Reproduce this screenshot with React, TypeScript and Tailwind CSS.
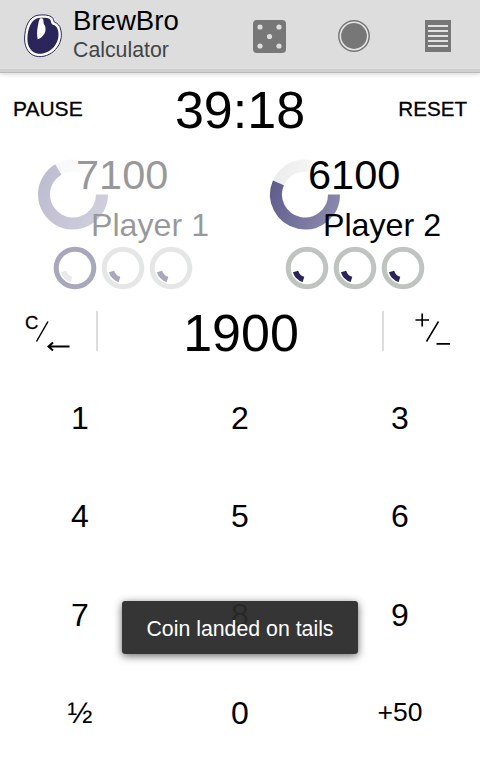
const NAVY = "#2b2659"

const players = [
  { name: "Player 1", points: "7100", sweep: 239.6, active: false, won: 1 },
  { name: "Player 2", points: "6100", sweep: 203.5, active: true, won: 0 },
]

const keys = ["1", "2", "3", "4", "5", "6", "7", "8", "9", "½", "0", "+50"]

// clockwise arc, 0deg at three o'clock
const arc = (cx: number, cy: number, r: number, from: number, to: number) => {
  const point = (deg: number) => {
    const rad = (deg * Math.PI) / 180
    return `${(cx + r * Math.cos(rad)).toFixed(2)} ${(cy + r * Math.sin(rad)).toFixed(2)}`
  }
  return `M${point(from)} A${r} ${r} 0 ${to - from > 180 ? 1 : 0} 1 ${point(to)}`
}

const Logo = () => (
  <svg className="ml-6 h-11 w-[38px]" viewBox="0 0 38 44">
    <path
      d="M14 1.200 C19 .6 24.500 .8 27.500 2.800 C29.800 4.500 29.300 6.500 30.300 8 C33.500 9.300 36 11.500 36.500 15 C38.200 20 37.600 27 33.500 33 C29 39.500 22 43 14.500 42.600 C5 42 .6 33.500 .6 25 C.6 13 5 2.500 14 1.200 Z"
      fill="#fff"
      stroke={NAVY}
      strokeWidth="1"
    />
    <path
      d="M14.500 4 C19 3.400 23.500 3.400 25.800 5 C27.300 6.400 26.600 9 28.300 10.400 C31.500 11.300 33.500 13.200 33.900 16 C35.300 21 34.500 26.500 31 31.500 C27 37 21 40 14.800 39.800 C7 39.300 3.400 32 3.400 25 C3.400 14.500 7.500 5 14.500 4 Z"
      fill={NAVY}
    />
    <path d="M16 4.500 C17.500 4 18.800 4.300 19.200 5.500 L19.800 10 C22 12 22 17 20.500 19.500 C18.500 22.500 16.500 24.500 13.700 25.200 C12.700 21 13 16.500 13.700 13 C14.500 9.500 14.500 6.500 16 4.500 Z" fill="#fff" />
  </svg>
)

const DiceIcon = () => (
  <svg className="h-[33px] w-[33px]" viewBox="0 0 33 33">
    <rect width="33" height="33" rx="4" fill="#777" />
    <g fill="#ddd">
      <circle cx="7" cy="7" r="2.600" />
      <circle cx="26" cy="7" r="2.600" />
      <circle cx="16.500" cy="16.500" r="2.600" />
      <circle cx="7" cy="26" r="2.600" />
      <circle cx="26" cy="26" r="2.600" />
    </g>
  </svg>
)

const CoinIcon = () => (
  <svg className="h-8 w-8" viewBox="0 0 32 32">
    <circle cx="16" cy="16" r="15.200" fill="#e6e6e6" stroke="#777" strokeWidth="1.500" />
    <circle cx="16" cy="16" r="12.900" fill="#777" />
  </svg>
)

const LogIcon = () => (
  <svg className="h-8 w-[26px]" viewBox="0 0 26 32">
    <rect width="26" height="32" fill="#777" />
    <path d="M3 6h20M3 11h20M3 16h20M3 21h20M3 26h20" stroke="#e2e2e2" strokeWidth="2" />
  </svg>
)

const Header = () => (
  <header className="flex h-[73px] items-center border-b border-[#b9b9b9] bg-[#ddd] shadow-[inset_0_-3px_0_#d0d0d0,0_1px_5px_rgba(0,0,0,0.18)]">
    <Logo />
    <div className="ml-[11px] flex w-[168px] flex-col pb-0.5">
      <h1 className="text-[27.600px] leading-[30px]">BrewBro</h1>
      <p className="text-[21.300px] leading-[28px] text-[#444]">Calculator</p>
    </div>
    <div className="ml-3 flex items-center">
      <DiceIcon />
      <div className="ml-[52px]">
        <CoinIcon />
      </div>
      <div className="ml-[55px]">
        <LogIcon />
      </div>
    </div>
  </header>
)

const Player = ({ name, points, sweep, active, won }: (typeof players)[number]) => (
  <section className={`relative h-[150px] w-[232px] ${active ? "" : "opacity-40"}`}>
    <svg className="h-[150px] w-[232px]" viewBox="0 0 232 150">
      <defs>
        <linearGradient id={`lp-${points}`} x1="38" y1="20" x2="108" y2="50" gradientUnits="userSpaceOnUse">
          <stop offset="0" stopColor="#5a5788" />
          <stop offset="1" stopColor="#8886ab" />
        </linearGradient>
        <linearGradient id={`track-${points}`} x1="40" y1="0" x2="96" y2="0" gradientUnits="userSpaceOnUse">
          <stop offset="0" stopColor="#ececec" />
          <stop offset="0.600" stopColor="#f3f3f3" />
          <stop offset="1" stopColor="#fff" />
        </linearGradient>
      </defs>
      <g fill="none">
        <path d={arc(73, 49.5, 29, sweep, 320)} stroke={`url(#track-${points})`} strokeWidth="12" />
        <path d={arc(73, 49.5, 29, 0, sweep)} stroke={`url(#lp-${points})`} strokeWidth="12" />
        {[75, 123, 171].map((cx, i) => (
          <g key={cx}>
            <circle cx={cx} cy="123" r="18.800" stroke={i < won ? NAVY : "#c0c4c1"} strokeWidth="5" />
            <path d={arc(cx, 123, 12, 107, 163)} stroke={i < won ? "#c8cac9" : NAVY} strokeWidth="5.500" />
          </g>
        ))}
      </g>
    </svg>
    <span className="absolute left-[76px] top-[8px] text-[41.500px] leading-[44px]">{points}</span>
    <span className="absolute left-[91px] top-[62px] whitespace-nowrap text-[32.200px] leading-[36px]">{name}</span>
  </section>
)

const App = () => {
  return (
    <div className="relative flex h-[762px] w-[480px] flex-col overflow-hidden bg-white font-['Liberation_Sans',Arial,sans-serif] text-black">
      <Header />
      <div className="flex h-[72px] items-center justify-between px-[13px]">
        <button className="w-24 text-left text-[21px] [-webkit-text-stroke:0.3px_#000]">PAUSE</button>
        <span className="pt-0.5 text-[52px] leading-[60px]">39:18</span>
        <button className="w-24 text-right text-[20.600px] [-webkit-text-stroke:0.3px_#000]">RESET</button>
      </div>
      <div className="flex h-[155px]">
        {players.map((player) => (
          <Player key={player.name} {...player} />
        ))}
      </div>
      <div className="mb-2 flex h-[61px] items-center">
        <button className="flex h-full w-24 items-center pl-6">
          <svg className="h-10 w-12" viewBox="0 0 48 40" fill="none" stroke="#000">
            <text x="1" y="17.500" fontSize="18.500" fill="#000" strokeWidth="0.300">
              C
            </text>
            <path d="M12.500 30.500 L24 10.500" strokeWidth="1.500" />
            <path d="M25 35.500 H45.500 M29 31.500 L24.500 35.500 L29 39.500" strokeWidth="2" />
          </svg>
        </button>
        <div className="flex h-10 flex-1 items-center justify-center border-x-2 border-[#ddd] pl-0.5 pt-1 text-[52px] leading-10">1900</div>
        <button className="flex h-full w-24 items-center pl-7">
          <svg className="h-10 w-12" viewBox="0 0 48 40" fill="none" stroke="#000" strokeWidth="1.700">
            <path d="M3.500 9 H17 M10.200 2.500 V15.500 M24.500 32.800 H38" />
            <path d="M14.500 30.500 L26.500 10.500" strokeWidth="1.500" />
          </svg>
        </button>
      </div>
      <div className="grid flex-1 grid-cols-3 grid-rows-4">
        {keys.map((key) => (
          <button key={key} className={key === "+50" ? "text-[26.500px]" : key === "½" ? "text-[30px]" : "text-[32px]"}>
            {key}
          </button>
        ))}
      </div>
      <div className="absolute left-[122px] top-[601px] flex h-[53px] w-[236px] items-center justify-center rounded-[3px] bg-[#2a2a2a]/95 pt-1 text-[21.300px] text-white shadow-[0_2px_9px_rgba(0,0,0,0.6)]">
        Coin landed on tails
      </div>
    </div>
  )
}

export default App
